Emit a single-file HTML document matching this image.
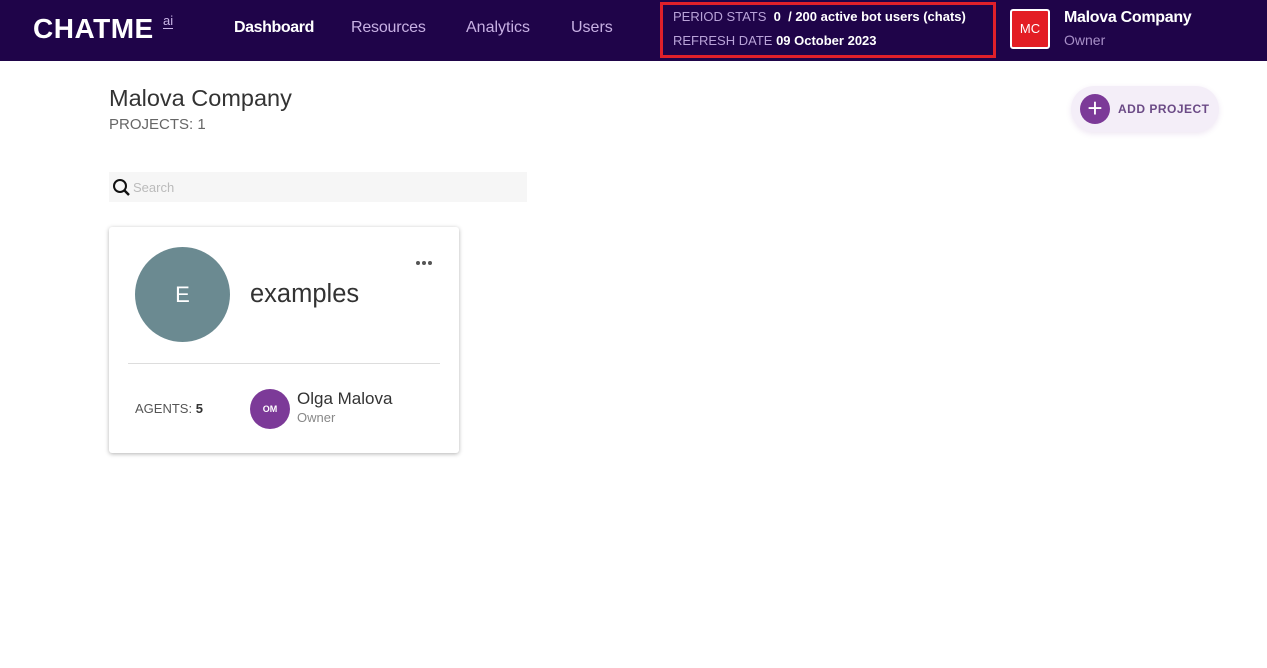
<!DOCTYPE html>
<html><head><meta charset="utf-8"><style>
*{margin:0;padding:0;box-sizing:border-box}
body{width:1267px;height:668px;background:#fff;font-family:"Liberation Sans",sans-serif;position:relative;overflow:hidden}
.hdr{position:absolute;left:0;top:0;width:1267px;height:61px;background:#1f0449}
.abs{position:absolute;white-space:nowrap}
.dot{position:absolute;width:4px;height:4px;border-radius:50%;background:#555;top:261px}
</style></head><body>
<div class="hdr">
 <div class="abs" style="left:33px;top:13px;font-size:28px;font-weight:bold;color:#fff;letter-spacing:0.5px">CHATME</div>
 <div class="abs" style="left:163px;top:14px;font-size:13px;color:#c9b5e6;border-bottom:1px solid #c9b5e6;line-height:14px">ai</div>
 <div class="abs" style="left:234px;top:19px;font-size:16px;color:#fff;font-weight:bold;letter-spacing:-0.4px">Dashboard</div>
 <div class="abs" style="left:351px;top:19px;font-size:16px;color:#c7b0e3;letter-spacing:-0.2px">Resources</div>
 <div class="abs" style="left:466px;top:19px;font-size:16px;color:#c7b0e3">Analytics</div>
 <div class="abs" style="left:571px;top:19px;font-size:16px;color:#c7b0e3">Users</div>
 <div class="abs" style="left:660px;top:2px;width:336px;height:56px;border:3px solid #e0202a"></div>
 <div class="abs" style="left:673px;top:9px;font-size:13px;color:#b9a3d8">PERIOD STATS <b style="color:#fff">&nbsp;0 &nbsp;/ 200 active bot users (chats)</b></div>
 <div class="abs" style="left:673px;top:33px;font-size:13px;color:#b9a3d8">REFRESH DATE <b style="color:#fff">09 October 2023</b></div>
 <div class="abs" style="left:1010px;top:9px;width:40px;height:40px;background:#e31e24;border:2px solid #fff;border-radius:3px;color:#fff;font-size:13px;text-align:center;line-height:36px">MC</div>
 <div class="abs" style="left:1064px;top:9px;font-size:16px;color:#fff;font-weight:bold;letter-spacing:-0.3px">Malova Company</div>
 <div class="abs" style="left:1064px;top:32px;font-size:14px;color:#a890c8">Owner</div>
</div>
<div class="abs" style="left:109px;top:85px;font-size:23.5px;color:#333">Malova Company</div>
<div class="abs" style="left:109px;top:116px;font-size:15px;color:#666">PROJECTS: 1</div>
<div class="abs" style="left:1071px;top:86px;width:148px;height:46px;border-radius:23px;background:#f4eef8;box-shadow:0 2px 6px rgba(120,60,160,0.12)"></div>
<div class="abs" style="left:1080px;top:94px;width:30px;height:30px;border-radius:50%;background:#7c3a98;color:#fff;font-size:26px;line-height:28px;text-align:center">+</div>
<div class="abs" style="left:1118px;top:102px;font-size:12px;font-weight:bold;color:#6b4a86;letter-spacing:0.5px">ADD PROJECT</div>
<div class="abs" style="left:109px;top:172px;width:418px;height:30px;background:#f6f6f6"></div>
<svg class="abs" style="left:112px;top:178px" width="19" height="19" viewBox="0 0 19 19"><circle cx="8" cy="8" r="6" fill="none" stroke="#111" stroke-width="2"/><path d="M12.5 12.5L17 17" stroke="#111" stroke-width="2.4"/></svg>
<div class="abs" style="left:133px;top:180px;font-size:13px;color:#bbb">Search</div>
<div class="abs" style="left:109px;top:227px;width:350px;height:226px;background:#fff;border-radius:3px;box-shadow:0 1px 4px rgba(0,0,0,0.3)"></div>
<div class="abs" style="left:135px;top:247px;width:95px;height:95px;border-radius:50%;background:#6b8a91;color:#fff;font-size:22px;text-align:center;line-height:95px">E</div>
<div class="abs" style="left:250px;top:280px;font-size:25.5px;color:#333">examples</div>
<div class="dot" style="left:416px"></div><div class="dot" style="left:422px"></div><div class="dot" style="left:428px"></div>
<div class="abs" style="left:128px;top:363px;width:312px;height:1px;background:#ddd"></div>
<div class="abs" style="left:135px;top:401px;font-size:13px;color:#555">AGENTS: <b style="color:#333">5</b></div>
<div class="abs" style="left:250px;top:389px;width:40px;height:40px;border-radius:50%;background:#7c3a98;color:#fff;font-size:9px;font-weight:bold;text-align:center;line-height:40px">OM</div>
<div class="abs" style="left:297px;top:389px;font-size:17px;color:#333">Olga Malova</div>
<div class="abs" style="left:297px;top:410px;font-size:13px;color:#888">Owner</div>
</body></html>
